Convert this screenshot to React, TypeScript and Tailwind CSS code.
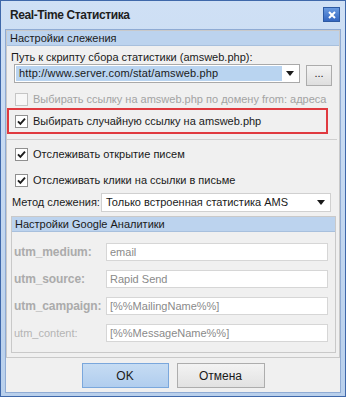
import React from 'react';

const Check = ({ checked, disabled }: { checked?: boolean; disabled?: boolean }) => (
  <span
    className={
      'flex h-[13px] w-[13px] shrink-0 items-center justify-center border ' +
      (disabled ? 'border-[#c5c5c5] bg-[#f7f7f7]' : 'border-[#8f8f8f] bg-white')
    }
  >
    {checked && (
      <svg width="9" height="9" viewBox="0 0 9 9">
        <path d="M1 4.3 L3.4 6.8 L8 1.6" stroke="#1c1c1c" strokeWidth="1.9" fill="none" />
      </svg>
    )}
  </span>
);

const Arrow = () => (
  <svg width="8" height="5" viewBox="0 0 8 5">
    <path d="M0 0 H8 L4 5 Z" fill="#1a1a1a" />
  </svg>
);

const UtmRow = ({ label, value, bold }: { label: string; value: string; bold?: boolean }) => (
  <div className="flex h-[18px] items-center">
    <span
      className={
        'w-[94px] whitespace-nowrap pl-[2px] ' +
        (bold ? 'text-[12px] font-bold tracking-[-0.1px] text-[#ababab]' : 'text-[11px] text-[#b4b4b4]')
      }
    >
      {label}
    </span>
    <div className="flex h-[18px] w-[222px] items-center border border-[#d6d6d6] bg-white pl-[3px] text-[11px] text-[#8a8a8a]">
      {value}
    </div>
  </div>
);

const App: React.FC = () => {
  return (
    <div
      className="flex h-[397px] w-[346px] flex-col border border-[#3f68aa] bg-gradient-to-b from-[#cfe0f5] to-[#b9d0ec] px-[4px] pb-[3px] text-[11px] text-[#1a1a1a]"
      style={{ fontFamily: '"Liberation Sans", Arial, sans-serif' }}
    >
      {/* title bar */}
      <div className="flex h-[28px] shrink-0 items-center justify-between pl-[5px] pr-[1px]">
        <span className="text-[12px] font-bold tracking-[-0.4px] text-[#1e1e1e]">Real-Time Статистика</span>
        <span className="mb-[1px] flex h-[15px] w-[17px] items-center justify-center border border-[#2d5aa3] bg-gradient-to-b from-[#6b9be0] to-[#3466c0]">
          <svg width="8" height="8" viewBox="0 0 8 8">
            <path d="M1 1 L7 7 M7 1 L1 7" stroke="#ffffff" strokeWidth="2" />
          </svg>
        </span>
      </div>

      {/* client area */}
      <div className="flex flex-1 flex-col whitespace-nowrap border border-[#8fabd4] bg-[#f0f0f0]">
        {/* main group */}
        <div className="flex h-[328px] flex-col border border-[#c9c9c9]">
          <div className="flex h-[15px] items-center border-b border-[#a8c0dd] bg-[#bcd3ee] pl-[3px]">
            Настройки слежения
          </div>

          <div className="mt-[4px] h-[14px] pl-[4px] leading-[14px]">
            Путь к скрипту сбора статистики (amsweb.php):
          </div>

          <div className="flex h-[22px] items-start pl-[7px]">
            <div className="flex h-[19px] w-[286px] items-center border border-[#a9a9a9] bg-white p-[1px]">
              <div className="flex h-full flex-1 items-center bg-[#b9d4f0] pl-[3px] tracking-[0.15px]">
                http://www.server.com/stat/amsweb.php
              </div>
              <div className="flex w-[16px] items-center justify-center">
                <Arrow />
              </div>
            </div>
            <div className="ml-[6px] mt-[1px] flex h-[21px] w-[26px] items-center justify-center border border-[#acacac] bg-gradient-to-b from-[#f4f4f4] to-[#dedede] pb-[4px]">
              ...
            </div>
          </div>

          <div className="mt-[7px] flex h-[13px] items-center pl-[8px]">
            <Check disabled />
            <span className="ml-[5px] text-[#a3a3a3]">
              Выбирать ссылку на amsweb.php по домену from: адреса
            </span>
          </div>

          <div className="mt-[2px] flex h-[26px] w-[321px] items-center border-2 border-[#e03a40] pl-[6px]">
            <Check checked />
            <span className="ml-[5px]">Выбирать случайную ссылку на amsweb.php</span>
          </div>

          <div className="mt-[5px] h-[2px] w-[330px] border-t border-[#cfcfcf] border-b-white" />

          <div className="mt-[7px] flex h-[13px] items-center pl-[8px]">
            <Check checked />
            <span className="ml-[5px]">Отслеживать открытие писем</span>
          </div>

          <div className="mt-[13px] flex h-[13px] items-center pl-[8px]">
            <Check checked />
            <span className="ml-[5px]">Отслеживать клики на ссылки в письме</span>
          </div>

          <div className="mt-[6px] flex h-[19px] items-center pl-[5px]">
            <span className="w-[89px]">Метод слежения:</span>
            <div className="flex h-[19px] w-[230px] items-center border border-[#d0d0d0] bg-white pl-[4px]">
              <span className="flex-1">Только встроенная статистика AMS</span>
              <span className="flex w-[18px] items-center justify-center">
                <Arrow />
              </span>
            </div>
          </div>

          {/* google group */}
          <div className="ml-[4px] mt-[4px] flex h-[137px] w-[325px] flex-col border border-[#c9c9c9]">
            <div className="flex h-[15px] items-center border-b border-[#a8c0dd] bg-[#bcd3ee] pl-[3px]">
              Настройки Google Аналитики
            </div>
            <div className="mt-[11px] flex flex-col gap-[9px]">
              <UtmRow label="utm_medium:" value="email" bold />
              <UtmRow label="utm_source:" value="Rapid Send" bold />
              <UtmRow label="utm_campaign:" value="[%%MailingName%%]" bold />
              <UtmRow label="utm_content:" value="[%%MessageName%%]" />
            </div>
          </div>
        </div>

        {/* buttons */}
        <div className="mt-[5px] flex justify-center gap-[8px]">
          <div className="flex h-[25px] w-[87px] items-center justify-center border border-[#7aa7dc] bg-gradient-to-b from-[#c6dcf3] to-[#b0cdee] text-[12px]">
            OK
          </div>
          <div className="flex h-[25px] w-[88px] items-center justify-center border border-[#adadad] bg-gradient-to-b from-[#f3f3f3] to-[#e2e2e2] text-[12px]">
            Отмена
          </div>
        </div>
      </div>
    </div>
  );
};

export default App;
